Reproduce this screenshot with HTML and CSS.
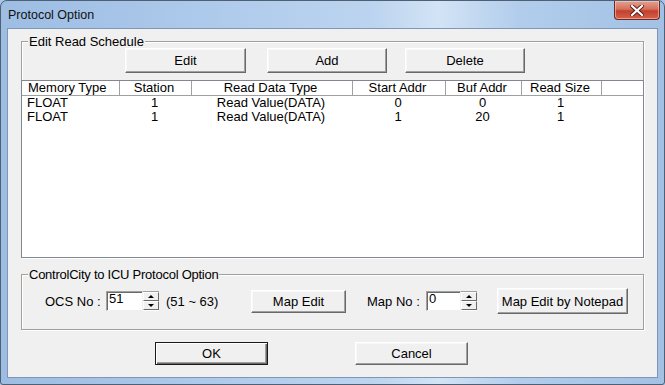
FILE: index.html
```html
<!DOCTYPE html>
<html lang="en">
<head>
  <meta charset="UTF-8">
  <title>Protocol Option</title>
  <link rel="stylesheet" href="styles.css">
</head>
<body>

  <div class="window">
    <div class="titlebar">
      <span class="title">Protocol Option</span>
      <button class="close-btn" title="Close">
        <svg width="14" height="11" viewBox="0 0 14 11">
          <path d="M2 1 L12 10 M12 1 L2 10" stroke="#5a1a14" stroke-width="4" stroke-linecap="square"/>
          <path d="M2 1 L12 10 M12 1 L2 10" stroke="#fff" stroke-width="2.2" stroke-linecap="square"/>
        </svg>
      </button>
    </div>

    <div class="client">

      <section class="group schedule">
        <span class="group-title">Edit Read Schedule</span>

        <div class="schedule-buttons">
          <button class="button btn-edit">Edit</button>
          <button class="button btn-add">Add</button>
          <button class="button btn-delete">Delete</button>
        </div>

        <div class="listview">
          <div class="lv-row lv-header">
            <div class="lv-cell left">Memory Type</div>
            <div class="lv-cell">Station</div>
            <div class="lv-cell">Read Data Type</div>
            <div class="lv-cell">Start Addr</div>
            <div class="lv-cell">Buf Addr</div>
            <div class="lv-cell">Read Size</div>
            <div class="lv-cell last"></div>
          </div>
          <div class="lv-row">
            <div class="lv-cell left">FLOAT</div>
            <div class="lv-cell">1</div>
            <div class="lv-cell">Read Value(DATA)</div>
            <div class="lv-cell">0</div>
            <div class="lv-cell">0</div>
            <div class="lv-cell">1</div>
            <div class="lv-cell"></div>
          </div>
          <div class="lv-row">
            <div class="lv-cell left">FLOAT</div>
            <div class="lv-cell">1</div>
            <div class="lv-cell">Read Value(DATA)</div>
            <div class="lv-cell">1</div>
            <div class="lv-cell">20</div>
            <div class="lv-cell">1</div>
            <div class="lv-cell"></div>
          </div>
        </div>
      </section>

      <section class="group protocol">
        <span class="group-title">ControlCity to ICU Protocol Option</span>

        <div class="protocol-row">
          <span class="label ocs-label">OCS No :</span>
          <div class="spin ocs-spin">
            <input class="spin-input" type="text" value="51">
            <div class="spin-buttons">
              <span class="spin-btn"><i class="arrow up"></i></span>
              <span class="spin-btn"><i class="arrow down"></i></span>
            </div>
          </div>
          <span class="range">(51 ~ 63)</span>
          <button class="button btn-map">Map Edit</button>
          <span class="label map-label">Map No :</span>
          <div class="spin map-spin">
            <input class="spin-input" type="text" value="0">
            <div class="spin-buttons">
              <span class="spin-btn"><i class="arrow up"></i></span>
              <span class="spin-btn"><i class="arrow down"></i></span>
            </div>
          </div>
          <button class="button btn-notepad">Map Edit by Notepad</button>
        </div>
      </section>

      <div class="dialog-buttons">
        <button class="button default-btn">OK</button>
        <button class="button">Cancel</button>
      </div>

    </div>
  </div>

</body>
</html>
```

FILE: styles.css
```css
* {
  box-sizing: border-box;
}

html,
body {
  margin: 0;
  background-color: #a9c6e8;
}

body {
  font-family: "Liberation Sans", Arial, sans-serif;
  font-size: 13px;
  color: #000;
}

/* Window frame */
.window {
  width: 665px;
  height: 385px;
  border: 1px solid #4f5f74;
  border-radius: 7px 7px 3px 3px;
  padding: 0 6px 6px;
  background: #a9c6e8 linear-gradient(to right, #9dbde3 0%, #adc9eb 30%, #bcd4ef 56%, #d2e3f5 66%, #b2cdec 78%, #a2c1e5 100%);
}

.titlebar {
  height: 27px;
  display: flex;
  align-items: flex-start;
  justify-content: space-between;
}

.title {
  margin: 7px 0 0 1px;
  font-size: 12.5px;
  color: #111;
}

.close-btn {
  width: 46px;
  height: 19px;
  margin-right: -2px;
  padding: 0;
  border: 1px solid #6b2a22;
  border-top: none;
  border-radius: 0 0 4px 4px;
  background: linear-gradient(#e3a192 0%, #d7705c 45%, #c2412c 55%, #d4604a 100%);
  box-shadow: inset 0 0 0 1px rgba(255, 220, 210, 0.5);
  display: flex;
  align-items: center;
  justify-content: center;
}

.client {
  height: 350px;
  border: 1px solid #7f97b4;
  background-color: #f0f0f0;
  padding: 0 12px;
}

/* Group boxes */
.group {
  border: 1px solid #a0a0a0;
  box-shadow: inset 1px 1px 0 #fff, 1px 1px 0 #fff;
  margin: 12px 1px 0;
}

.group-title {
  display: block;
  width: fit-content;
  margin: -8px 0 -7px 6px;
  padding: 0 1px;
  line-height: 15px;
  background-color: #f0f0f0;
}

.protocol .group-title {
  letter-spacing: -0.25px;
}

/* Buttons */
.button {
  font-family: "Liberation Sans", Arial, sans-serif;
  font-size: 13px;
  color: #000;
  background-color: #f0f0f0;
  border: 1px solid;
  border-color: #fff #696969 #696969 #fff;
  box-shadow: inset -1px -1px 0 #a0a0a0, inset 1px 1px 0 #f8f8f8;
  padding: 0;
  height: 25px;
}

.default-btn {
  border-color: #1a1a1a;
  box-shadow: inset 1px 1px 0 #fff, inset -1px -1px 0 #696969, inset -2px -2px 0 #a0a0a0;
}

.schedule-buttons {
  display: flex;
  margin: 6px 0 7px 103px;
}

.btn-edit {
  width: 121px;
}

.btn-add {
  width: 120px;
  margin-left: 21px;
}

.btn-delete {
  width: 120px;
  margin-left: 18px;
}

/* List view */
.listview {
  margin: 0 -1px -1px;
  height: 178px;
  border: 1px solid #828790;
  background-color: #fff;
}

.lv-row {
  display: grid;
  grid-template-columns: 98px 72px 161px 93px 76px 80px 1fr;
  height: 14px;
  line-height: 14px;
}

.lv-header {
  height: 15px;
  line-height: 14px;
  border-bottom: 1px solid #a0a0a0;
}

.lv-cell {
  text-align: center;
  white-space: nowrap;
  overflow: hidden;
  padding-right: 3px;
}

.lv-cell.left {
  text-align: left;
  padding-left: 5px;
}

.lv-header .lv-cell {
  border-right: 1px solid #a0a0a0;
}

.lv-header .lv-cell.left {
  padding-left: 6px;
}

.lv-header .lv-cell.last {
  border-right: none;
}

/* Protocol options */
.protocol {
  margin-top: 16px;
}

.protocol-row {
  display: flex;
  align-items: center;
  height: 26px;
  margin: 13px 0 15px 23px;
}

.label {
  white-space: nowrap;
}

.ocs-label {
  width: 61px;
}

.map-label {
  width: 59px;
  margin-left: 21px;
}

.spin {
  display: flex;
  height: 20px;
}

.spin-input {
  height: 20px;
  margin: 0;
  padding: 0 0 5px 2px;
  font-family: "Liberation Sans", Arial, sans-serif;
  font-size: 13px;
  line-height: 14px;
  background-color: #fff;
  border: 1px solid;
  border-color: #a0a0a0 #f0f0f0 #f0f0f0 #a0a0a0;
  box-shadow: inset 1px 1px 0 #696969;
  outline: none;
}

.ocs-spin .spin-input {
  width: 37px;
}

.map-spin .spin-input {
  width: 35px;
}

.spin-buttons {
  width: 16px;
  display: flex;
  flex-direction: column;
  border-top: 1px solid #a0a0a0;
  border-bottom: 1px solid #fff;
}

.spin-btn {
  flex: 1;
  display: flex;
  align-items: center;
  justify-content: center;
  background-color: #f0f0f0;
  border: 1px solid;
  border-color: #fff #696969 #696969 #fff;
}

.arrow {
  width: 0;
  height: 0;
  border-left: 3px solid transparent;
  border-right: 3px solid transparent;
}

.arrow.up {
  border-bottom: 3px solid #000;
}

.arrow.down {
  border-top: 3px solid #000;
}

.range {
  width: 85px;
  margin-left: 7px;
}

.btn-map {
  width: 95px;
  height: 23px;
}

.btn-notepad {
  width: 131px;
  height: 26px;
  margin-left: 20px;
}

/* OK / Cancel */
.dialog-buttons {
  display: flex;
  gap: 87px;
  margin: 12px 0 0 135px;
}

.dialog-buttons .button {
  width: 113px;
  height: 23px;
}
```
